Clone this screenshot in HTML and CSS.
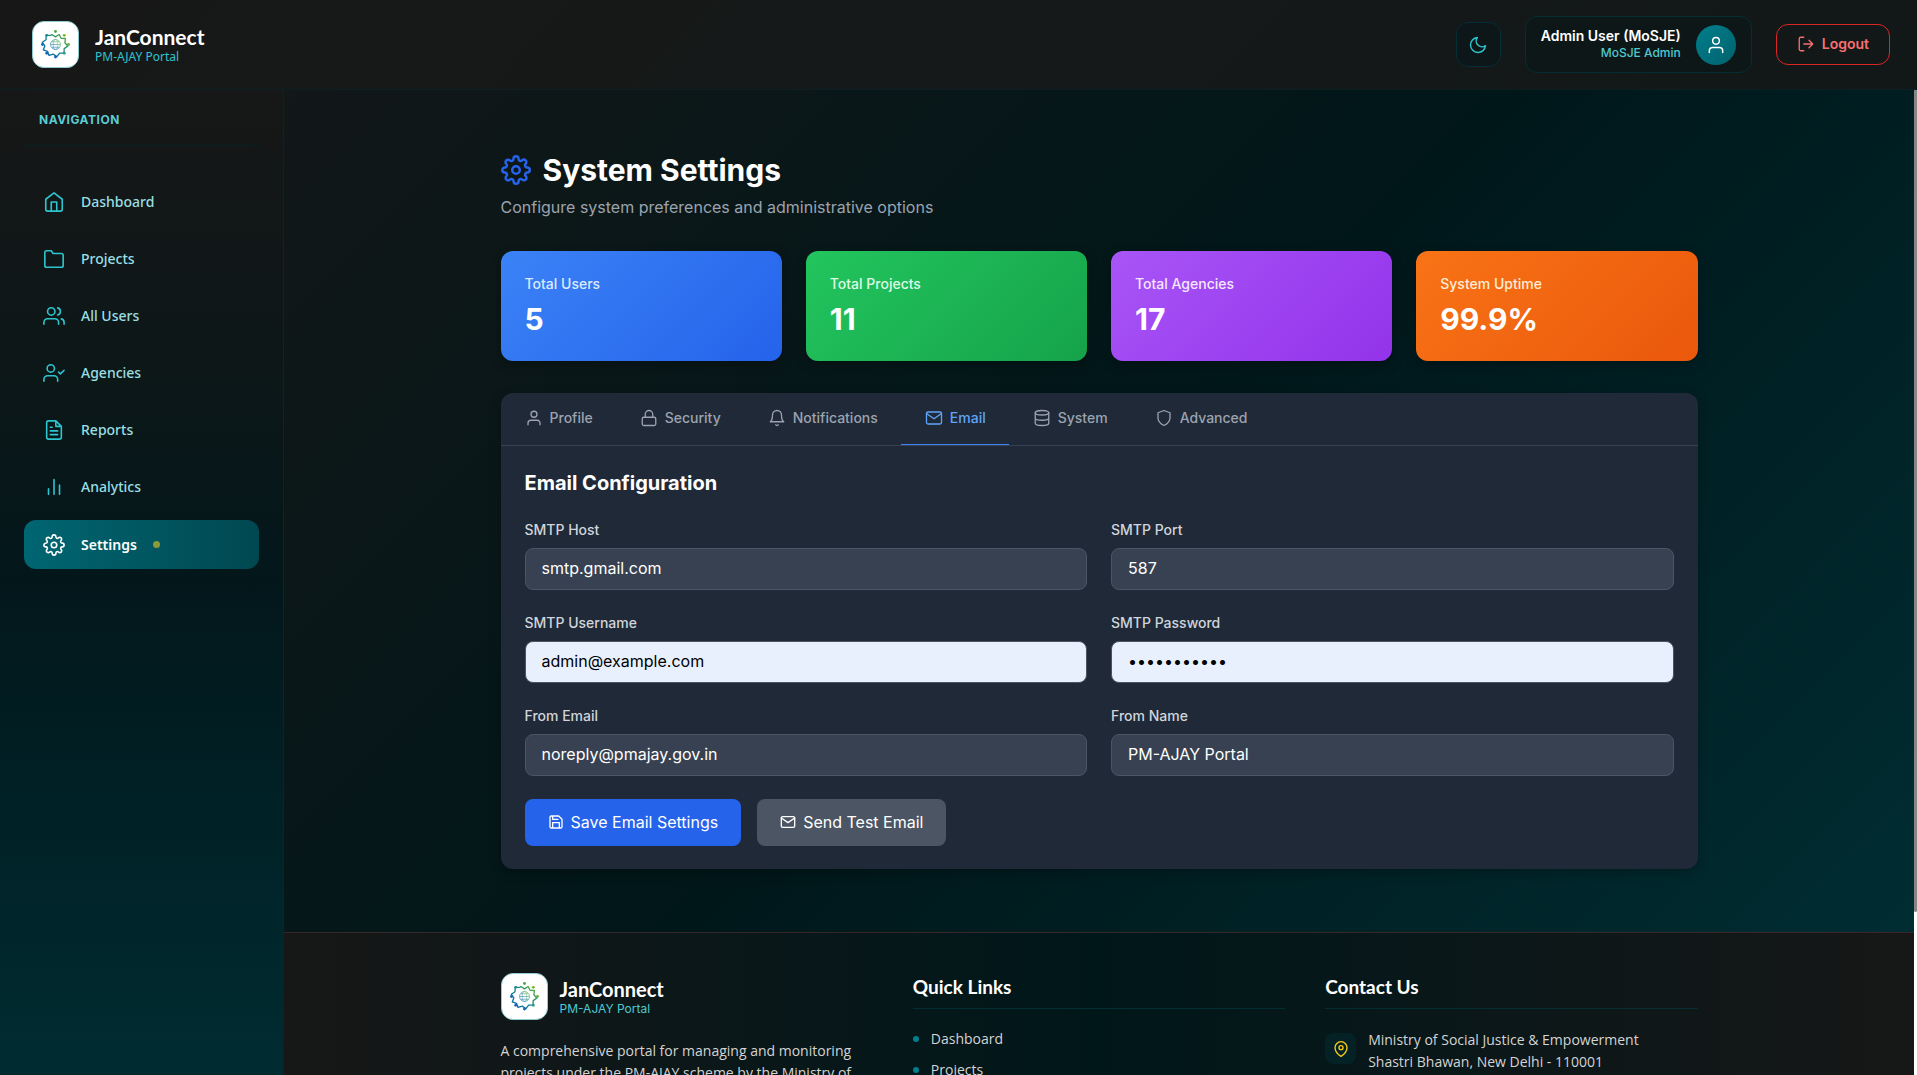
FILE: index.html
```html
<!DOCTYPE html>
<html lang="en">
<head>
<meta charset="utf-8">
<title>JanConnect - System Settings</title>
<meta name="viewport" content="width=device-width, initial-scale=1">
<link rel="stylesheet" href="styles.css">
</head>
<body>
<svg class="defs" aria-hidden="true">
  <defs>
    <linearGradient id="lg" x1="0" y1="1" x2="1" y2="0"><stop offset="0" stop-color="#0b63b8"/><stop offset=".5" stop-color="#11868a"/><stop offset="1" stop-color="#6cb52d"/></linearGradient>
    <symbol id="logo" viewBox="0 0 48 48">
      <g fill="none" stroke="url(#lg)" stroke-width="1.5" stroke-linejoin="round">
        <path d="M20 12.800l4 2.700 4-2.700 2.200 4.300 4.900.2-.6 4.800 3.200 3.700-4 2.800-.2 4.900-4.900.2-3 3.900-4.100-2.800-4.700 1.400-1.700-4.600-4.700-1.500 1.700-4.600-2.800-4 4.100-2.800.3-4.900 4.800.1z"/>
        <circle cx="24" cy="24" r="5.500" stroke-width=".7"/><ellipse cx="24" cy="24" rx="2.500" ry="5.500" stroke-width=".4"/>
        <path d="M19 24h10M20 21h8M20 27h8" stroke-width=".6"/>
      </g>
      <circle cx="24" cy="9.500" r="1.600" fill="#4fa846"/><circle cx="33.800" cy="13.800" r="1.600" fill="#76b82a"/><circle cx="38.500" cy="24" r="1.600" fill="#5fae45"/><circle cx="33.800" cy="33.800" r="1.600" fill="#2f9c86"/>
      <circle cx="24" cy="38" r="1.600" fill="#1263b5"/><circle cx="14.200" cy="33.800" r="1.600" fill="#1166b8"/><circle cx="9.500" cy="24" r="1.600" fill="#0f6cb8"/><circle cx="14.200" cy="13.800" r="1.600" fill="#16899e"/>
    </symbol>
    <symbol id="gear" viewBox="0 0 24 24"><path d="M19.4 15a1.65 1.65 0 0 0 .33 1.82l.06.06a2 2 0 0 1 0 2.83 2 2 0 0 1-2.83 0l-.06-.06a1.65 1.65 0 0 0-1.82-.33 1.65 1.65 0 0 0-1 1.51V21a2 2 0 0 1-2 2 2 2 0 0 1-2-2v-.09A1.65 1.65 0 0 0 9 19.4a1.65 1.65 0 0 0-1.82.33l-.06.06a2 2 0 0 1-2.83 0 2 2 0 0 1 0-2.83l.06-.06a1.65 1.65 0 0 0 .33-1.82 1.65 1.65 0 0 0-1.51-1H3a2 2 0 0 1-2-2 2 2 0 0 1 2-2h.09A1.65 1.65 0 0 0 4.6 9a1.65 1.65 0 0 0-.33-1.82l-.06-.06a2 2 0 0 1 0-2.83 2 2 0 0 1 2.83 0l.06.06a1.65 1.65 0 0 0 1.82.33H9a1.65 1.65 0 0 0 1-1.51V3a2 2 0 0 1 2-2 2 2 0 0 1 2 2v.09a1.65 1.65 0 0 0 1 1.51 1.65 1.65 0 0 0 1.82-.33l.06-.06a2 2 0 0 1 2.83 0 2 2 0 0 1 0 2.83l-.06.06a1.65 1.65 0 0 0-.33 1.82V9a1.65 1.65 0 0 0 1.51 1H21a2 2 0 0 1 2 2 2 2 0 0 1-2 2h-.09a1.65 1.65 0 0 0-1.51 1z"/><circle cx="12" cy="12" r="3"/></symbol>
    <symbol id="user" viewBox="0 0 24 24"><path d="M20 21v-2a4 4 0 0 0-4-4H8a4 4 0 0 0-4 4v2"/><circle cx="12" cy="7" r="4"/></symbol>
    <symbol id="mail" viewBox="0 0 24 24"><rect x="2" y="4" width="20" height="16" rx="2"/><path d="m22 6-10 7L2 6"/></symbol>
  </defs>
</svg>

<header class="topbar">
  <div class="brand">
    <svg class="logo"><use href="#logo"/></svg>
    <div>
      <div class="brand-name">JanConnect</div>
      <div class="brand-sub">PM-AJAY Portal</div>
    </div>
  </div>
  <div class="top-actions">
    <button class="theme" aria-label="Toggle theme"><svg class="icon i20" viewBox="0 0 24 24"><path d="M21 12.790A9 9 0 1 1 11.210 3 7 7 0 0 0 21 12.790z"/></svg></button>
    <button class="account">
      <span class="who"><span class="who-name">Admin User (MoSJE)</span><span class="who-role">MoSJE Admin</span></span>
      <span class="avatar"><svg class="icon i20"><use href="#user"/></svg></span>
    </button>
    <button class="logout"><svg class="icon i18" viewBox="0 0 24 24"><path d="M9 21H5a2 2 0 0 1-2-2V5a2 2 0 0 1 2-2h4M16 17l5-5-5-5M21 12H9"/></svg>Logout</button>
  </div>
</header>

<div class="shell">
  <aside class="sidebar">
    <div class="nav-title">Navigation</div>
    <nav class="nav">
      <a href="#"><svg class="icon i22" viewBox="0 0 24 24"><path d="m3 9 9-7 9 7v11a2 2 0 0 1-2 2H5a2 2 0 0 1-2-2zM9 22V12h6v10"/></svg>Dashboard</a>
      <a href="#"><svg class="icon i22" viewBox="0 0 24 24"><path d="M22 19a2 2 0 0 1-2 2H4a2 2 0 0 1-2-2V5a2 2 0 0 1 2-2h5l2 3h9a2 2 0 0 1 2 2z"/></svg>Projects</a>
      <a href="#"><svg class="icon i22" viewBox="0 0 24 24"><path d="M17 21v-2a4 4 0 0 0-4-4H5a4 4 0 0 0-4 4v2M23 21v-2a4 4 0 0 0-3-3.870M16 3.130a4 4 0 0 1 0 7.750"/><circle cx="9" cy="7" r="4"/></svg>All Users</a>
      <a href="#"><svg class="icon i22" viewBox="0 0 24 24"><path d="M16 21v-2a4 4 0 0 0-4-4H5a4 4 0 0 0-4 4v2M17 11l2 2 4-4"/><circle cx="8.500" cy="7" r="4"/></svg>Agencies</a>
      <a href="#"><svg class="icon i22" viewBox="0 0 24 24"><path d="M14 2H6a2 2 0 0 0-2 2v16a2 2 0 0 0 2 2h12a2 2 0 0 0 2-2V8zM14 2v6h6M16 13H8M16 17H8M10 9H8"/></svg>Reports</a>
      <a href="#"><svg class="icon i22" viewBox="0 0 24 24"><path d="M18 20V10M12 20V4M6 20v-6"/></svg>Analytics</a>
      <a href="#" class="active" aria-current="page"><svg class="icon i22"><use href="#gear"/></svg>Settings<span class="dot"></span></a>
    </nav>
  </aside>

  <div class="scroller">
    <main class="content">
      <div class="wrap">
        <h1><svg class="icon i30"><use href="#gear"/></svg>System Settings</h1>
        <p class="lead">Configure system preferences and administrative options</p>

        <section class="stats">
          <div class="stat blue"><span>Total Users</span><strong>5</strong></div>
          <div class="stat green"><span>Total Projects</span><strong>11</strong></div>
          <div class="stat purple"><span>Total Agencies</span><strong>17</strong></div>
          <div class="stat orange"><span>System Uptime</span><strong>99.9%</strong></div>
        </section>

        <section class="panel">
          <div class="tabs" role="tablist">
            <button role="tab"><svg class="icon i18"><use href="#user"/></svg>Profile</button>
            <button role="tab"><svg class="icon i18" viewBox="0 0 24 24"><rect x="3" y="11" width="18" height="11" rx="2"/><path d="M7 11V7a5 5 0 0 1 10 0v4"/></svg>Security</button>
            <button role="tab"><svg class="icon i18" viewBox="0 0 24 24"><path d="M18 8A6 6 0 0 0 6 8c0 7-3 9-3 9h18s-3-2-3-9M13.730 21a2 2 0 0 1-3.460 0"/></svg>Notifications</button>
            <button role="tab" class="on" aria-selected="true"><svg class="icon i18"><use href="#mail"/></svg>Email</button>
            <button role="tab"><svg class="icon i18" viewBox="0 0 24 24"><ellipse cx="12" cy="5" rx="9" ry="3"/><path d="M21 12c0 1.660-4 3-9 3s-9-1.340-9-3M3 5v14c0 1.660 4 3 9 3s9-1.340 9-3V5"/></svg>System</button>
            <button role="tab"><svg class="icon i18" viewBox="0 0 24 24"><path d="M12 22s8-4 8-10V5l-8-3-8 3v7c0 6 8 10 8 10z"/></svg>Advanced</button>
          </div>
          <form class="form">
            <h2>Email Configuration</h2>
            <div class="fields">
              <div class="field"><label for="host">SMTP Host</label><input id="host" type="text" value="smtp.gmail.com"></div>
              <div class="field"><label for="port">SMTP Port</label><input id="port" type="text" value="587"></div>
              <div class="field"><label for="user-name">SMTP Username</label><input id="user-name" class="filled" type="text" value="admin@example.com"></div>
              <div class="field"><label for="pass">SMTP Password</label><input id="pass" class="filled" type="password" value="password123"></div>
              <div class="field"><label for="from">From Email</label><input id="from" type="text" value="noreply@pmajay.gov.in"></div>
              <div class="field"><label for="name">From Name</label><input id="name" type="text" value="PM-AJAY Portal"></div>
            </div>
            <div class="actions">
              <button type="button" class="btn primary"><svg class="icon i16" viewBox="0 0 24 24"><path d="M19 21H5a2 2 0 0 1-2-2V5a2 2 0 0 1 2-2h11l5 5v11a2 2 0 0 1-2 2zM17 21v-8H7v8M7 3v5h8"/></svg>Save Email Settings</button>
              <button type="button" class="btn"><svg class="icon i16"><use href="#mail"/></svg>Send Test Email</button>
            </div>
          </form>
        </section>
      </div>
    </main>

    <footer class="footer">
      <div class="wrap foot-grid">
        <div>
          <div class="foot-brand">
            <svg class="logo"><use href="#logo"/></svg>
            <div>
              <div class="brand-name">JanConnect</div>
              <div class="brand-sub">PM-AJAY Portal</div>
            </div>
          </div>
          <p class="about">A comprehensive portal for managing and monitoring projects under the PM-AJAY scheme by the Ministry of</p>
        </div>
        <div>
          <h3>Quick Links</h3>
          <ul class="links">
            <li><a href="#">Dashboard</a></li>
            <li><a href="#">Projects</a></li>
          </ul>
        </div>
        <div>
          <h3>Contact Us</h3>
          <div class="contact">
            <span class="pin"><svg class="icon i16" viewBox="0 0 24 24"><path d="M21 10c0 7-9 13-9 13s-9-6-9-13a9 9 0 0 1 18 0z"/><circle cx="12" cy="10" r="3"/></svg></span>
            <address>Ministry of Social Justice &amp; Empowerment<br>Shastri Bhawan, New Delhi - 110001</address>
          </div>
        </div>
      </div>
    </footer>
  </div>
  <div class="rail" aria-hidden="true"><div class="thumb"></div></div>
</div>
</body>
</html>
```
FILE: styles.css
```css
* { box-sizing: border-box; }

body {
  margin: 0;
  height: 100vh;
  display: flex;
  flex-direction: column;
  overflow: hidden;
  background: #00171a;
  color: #fff;
  font-family: Inter, "Liberation Sans", sans-serif;
  font-size: 14px;
  line-height: 20px;
}

h1, h2, h3, p, ul { margin: 0; padding: 0; }
ul { list-style: none; }
a { color: inherit; text-decoration: none; }
button { font: inherit; color: inherit; background: none; border: 0; padding: 0; cursor: pointer; }

.defs { position: absolute; width: 0; height: 0; }
.icon { flex: none; fill: none; stroke: currentColor; stroke-width: 2; stroke-linecap: round; stroke-linejoin: round; }
.i16 { width: 16px; height: 16px; }
.i18 { width: 18px; height: 18px; }
.i20 { width: 20px; height: 20px; }
.i22 { width: 22px; height: 22px; }
.i30 { width: 30px; height: 30px; }

/* Header */
.topbar {
  flex: none;
  height: 90px;
  padding: 0 27px 0 32px;
  display: flex;
  align-items: center;
  justify-content: space-between;
  background: linear-gradient(135deg, #171717, #161919 50%, #121718);
  border-bottom: 1px solid #0b2024;
}
.brand { display: flex; align-items: center; gap: 16px; }
.logo {
  flex: none;
  display: block;
  width: 47px;
  height: 47px;
  padding: 1px;
  background: #fff;
  border: 1px solid #8fcdd2;
  border-radius: 12px;
}
.brand-name { font-family: Lato, sans-serif; font-size: 21px; line-height: 24px; font-weight: 700; }
.brand-sub { font-size: 12px; line-height: 16px; color: #2fc4cd; font-family: "Noto Sans", sans-serif; }
.top-actions { display: flex; align-items: center; gap: 24px; }
.theme {
  width: 45px;
  height: 45px;
  display: grid;
  place-items: center;
  color: #2fc4cd;
  background: #0d1719;
  border: 1px solid #032e34;
  border-radius: 12px;
}
.account {
  height: 57px;
  padding: 0 15px;
  display: flex;
  align-items: center;
  gap: 15px;
  text-align: right;
  background: #0e1718;
  border: 1px solid #032e34;
  border-radius: 12px;
}
.who { padding-bottom: 2px; }
.who-name { display: block; font-size: 14px; line-height: 18px; font-weight: 600; }
.who-role { display: block; font-size: 12px; line-height: 16px; font-weight: 500; color: #4fc9cf; }
.avatar {
  width: 40px;
  height: 40px;
  display: grid;
  place-items: center;
  border-radius: 50%;
  background: linear-gradient(135deg, #007f8c, #00626d);
}
.logout {
  height: 41px;
  padding: 0 20px 2px;
  display: flex;
  align-items: center;
  gap: 7px;
  color: #f87171;
  font-weight: 600;
  border: 1px solid #dc2626;
  border-radius: 12px;
}
.logout .icon, .theme .icon, .avatar .icon { stroke-width: 1.75; }

/* Sidebar */
.shell { flex: 1; min-height: 0; display: flex; }
.sidebar {
  flex: none;
  width: 284px;
  padding: 0 24px;
  background: linear-gradient(180deg, #171717, #0c1718 30%, #03171b 50%, #002227 75%, #002c31);
  border-right: 1px solid #08262a;
}
.nav-title {
  padding: 20px 15px 15px;
  margin-bottom: 32px;
  font-size: 12px;
  line-height: 20px;
  font-weight: 700;
  letter-spacing: 0.5px;
  text-transform: uppercase;
  color: #5accd2;
  border-bottom: 1px solid #062124;
}
.nav { display: flex; flex-direction: column; gap: 8px; }
.nav a {
  height: 49px;
  padding: 0 19px 2px;
  display: flex;
  align-items: center;
  gap: 16px;
  border-radius: 12px;
  font-family: "Noto Sans", sans-serif;
  font-weight: 500;
  color: #9adfe2;
}
.nav .icon { color: #2cc5cf; stroke-width: 1.75; }
.nav a.active { padding-bottom: 0; color: #fff; font-weight: 600; background: linear-gradient(90deg, #006672, #004850); }
.nav a.active .icon { color: #fff; }
.dot { width: 7px; height: 7px; border-radius: 50%; background: #8d9a3c; }

/* Page */
.scroller { flex: 1; min-width: 0; overflow-y: auto; scrollbar-width: none; }
.rail { flex: none; width: 3px; background: #fff; }
.thumb { height: 83.5%; background: #868686; border-radius: 0 0 2px 2px; }
.content {
  padding: 62px 32px 63px;
  background: linear-gradient(135deg, #121718, #0b1718 20%, #00171a 50%, #002d32);
}
.wrap { max-width: 1197px; margin: 0 auto; }
h1 { display: flex; align-items: center; gap: 12px; font-size: 30px; line-height: 36px; font-weight: 700; }
h1 .icon { color: #2563eb; }
.lead { margin-top: 7px; font-size: 16px; line-height: 24px; color: #9ca3af; }

.stats { margin: 32px 0; display: grid; grid-template-columns: repeat(4, 1fr); gap: 24px; }
.stat {
  height: 110px;
  padding: 23px 24px;
  border-radius: 12px;
  box-shadow: 0 4px 12px rgba(0, 0, 0, 0.25);
}
.stat span { display: block; line-height: 20px; font-weight: 500; }
.stat strong { display: block; margin-top: 7px; font-size: 30px; line-height: 36px; font-weight: 700; }
.blue { background: linear-gradient(135deg, #3b82f6, #2563eb); }
.blue span { color: #dbeafe; }
.green { background: linear-gradient(135deg, #22c55e, #16a34a); }
.green span { color: #dcfce7; }
.purple { background: linear-gradient(135deg, #a855f7, #9333ea); }
.purple span { color: #f3e8ff; }
.orange { background: linear-gradient(135deg, #f97316, #ea580c); }
.orange span { color: #ffedd5; }

.panel { background: #1f2937; border-radius: 12px; box-shadow: 0 4px 12px rgba(0, 0, 0, 0.25); }
.tabs { display: flex; border-bottom: 1px solid #374151; }
.tabs button {
  height: 52px;
  padding: 0 23px 2px 24px;
  display: flex;
  align-items: center;
  gap: 7px;
  font-weight: 500;
  color: #9ca3af;
  border-bottom: 1px solid transparent;
}
.tabs .icon { stroke-width: 1.75; }
.tabs .on { color: #60a5fa; border-color: #3b82f6; }

.form { padding: 24px 24px 23px; }
h2 { margin-bottom: 24px; font-size: 20px; line-height: 27px; font-weight: 700; }
.fields { display: grid; grid-template-columns: 1fr 1fr; gap: 24px; }
.field { display: flex; flex-direction: column; gap: 9px; }
.field label { line-height: 18px; font-weight: 500; color: #d1d5db; }
.field input {
  width: 100%;
  height: 42px;
  padding: 0 16px 2px;
  font: inherit;
  font-size: 16px;
  color: #fff;
  background: #374151;
  border: 1px solid #4b5563;
  border-radius: 8px;
}
.field input.filled { color: #000; background: #e8f0fe; }
.actions { margin-top: 23px; display: flex; gap: 16px; }
.btn {
  height: 47px;
  padding: 0 23px 2px;
  display: flex;
  align-items: center;
  gap: 7px;
  font-size: 16px;
  background: #4b5563;
  border-radius: 8px;
}
.btn.primary { background: #2563eb; }

/* Footer */
.footer {
  height: 338px;
  padding: 40px 32px;
  border-top: 1px solid #33272a;
  background: linear-gradient(90deg, #171717, #00171a 50%, #171717);
}
.foot-grid { display: grid; grid-template-columns: repeat(3, 1fr); gap: 40px; }
.foot-brand { display: flex; align-items: center; gap: 12px; }
.foot-brand .brand-name { font-size: 20px; }
.foot-brand .brand-sub { font-family: inherit; color: #4fc9cf; }
.about, .links, .contact { font-family: "Open Sans", sans-serif; font-size: 14px; line-height: 22px; color: #d4d4d4; }
.about { margin-top: 20px; }
h3 { padding-bottom: 8px; font-family: Lato, sans-serif; font-size: 19px; line-height: 27px; font-weight: 700; border-bottom: 1px solid #032e34; }
.links { margin-top: 19px; display: flex; flex-direction: column; gap: 9px; }
.links li { display: flex; align-items: center; gap: 12px; }
.links li::before { content: ""; width: 6px; height: 6px; border-radius: 50%; background: #007f8c; }
.contact { margin-top: 20px; display: flex; gap: 12px; }
.contact address { font-style: normal; }
.pin { flex: none; width: 31px; height: 31px; margin-top: 4px; display: grid; place-items: center; border-radius: 8px; background: #042226; color: #facc15; }
```
